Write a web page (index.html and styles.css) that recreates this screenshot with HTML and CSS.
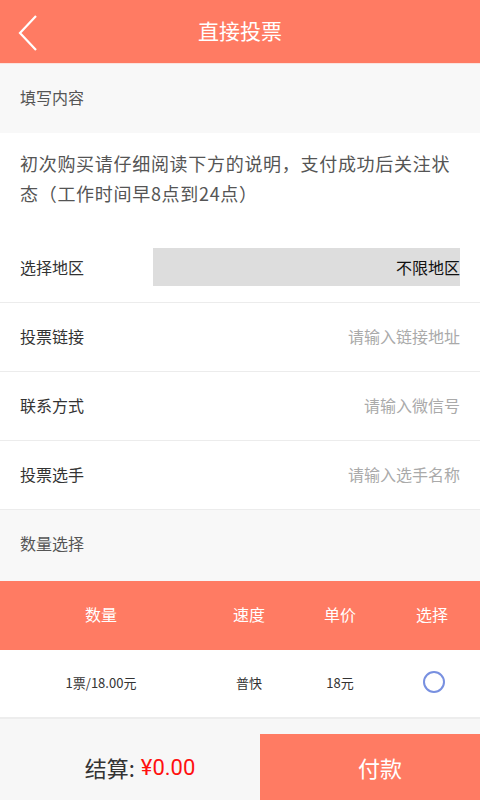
FILE: index.html
```html
<!DOCTYPE html>
<html lang="zh-CN">
<head>
<meta charset="utf-8">
<title>直接投票</title>
<link rel="stylesheet" href="styles.css">
</head>
<body>
<div class="page">
  <header class="topbar">
    <svg class="back" width="22" height="38" viewBox="0 0 22 38"><polyline points="18,2 2,19 18,36" fill="none" stroke="#fff" stroke-width="2.2"/></svg>
    <h1 class="title">直接投票</h1>
  </header>
  <div class="section">填写内容</div>
  <div class="notice">初次购买请仔细阅读下方的说明，支付成功后关注状态（工作时间早8点到24点）</div>
  <div class="row region">
    <span class="label">选择地区</span>
    <div class="select">不限地区</div>
  </div>
  <div class="row">
    <span class="label">投票链接</span>
    <span class="placeholder">请输入链接地址</span>
  </div>
  <div class="row">
    <span class="label">联系方式</span>
    <span class="placeholder">请输入微信号</span>
  </div>
  <div class="row">
    <span class="label">投票选手</span>
    <span class="placeholder">请输入选手名称</span>
  </div>
  <div class="section section-qty">数量选择</div>
  <div class="thead">
    <span>数量</span><span>速度</span><span>单价</span><span>选择</span>
  </div>
  <div class="trow">
    <span>1票/18.00元</span><span>普快</span><span>18元</span><span class="radio-cell"><i class="radio"></i></span>
  </div>
  <div class="spacer"></div>
  <footer class="bottombar">
    <div class="total">结算: <span class="amount">¥0.00</span></div>
    <div class="pay">付款</div>
  </footer>
</div>
</body>
</html>
```
FILE: styles.css
```css
* { box-sizing: border-box; margin: 0; padding: 0; }
html, body { width: 480px; height: 800px; overflow: hidden; }
body { font-family: "Noto Sans CJK SC", "Noto Sans", sans-serif; background: #f7f7f7; color: #444; }
.page { display: flex; flex-direction: column; height: 800px; }
.topbar { height: 64px; background: #ff7b63; display: flex; align-items: center; justify-content: center; position: relative; border-bottom: 1px solid #fbe3de; padding-bottom: 2px; }
.back { position: absolute; left: 18px; top: 14px; }
.title { font-size: 21px; font-weight: normal; color: #fff; line-height: 1; }
.section { height: 69px; background: #f8f8f8; display: flex; align-items: center; padding: 0 0 3px 20px; font-size: 16px; color: #555; }
.section-qty { height: 70px; padding-bottom: 5px; }
.notice { background: #fff; padding: 15px 20px 0 20px; font-size: 18px; letter-spacing: 0.7px; line-height: 30px; color: #555; height: 102px; }
.row { background: #fff; height: 69px; display: flex; align-items: center; justify-content: space-between; padding: 0 20px 2px; border-bottom: 1px solid #ececec; }
.region { height: 68px; padding-bottom: 3px; }
.label { font-size: 16px; color: #333; }
.select { width: 307px; height: 38px; background: #dddddd; display: flex; align-items: center; justify-content: flex-end; font-size: 16px; color: #111; padding-bottom: 1px; }
.placeholder { font-size: 16px; color: #aaa; }
.thead, .trow { display: grid; grid-template-columns: 202px 94px 88px 96px; align-items: center; text-align: center; }
.thead { height: 69px; background: #ff7b63; color: #fff; font-size: 16px; margin-top: 1px; padding-bottom: 3px; }
.trow { height: 69px; background: #fff; font-size: 13px; color: #333; border-bottom: 2px solid #ededed; padding-bottom: 3px; }
.radio-cell { display: flex; justify-content: center; padding-left: 3px; }
.radio { display: block; width: 22px; height: 22px; border: 2px solid #7890e0; border-radius: 50%; margin-top: 0; }
.spacer { height: 15px; background: #f7f7f7; }
.bottombar { flex: 1; display: flex; background: #f7f7f7; }
.total { width: 260px; display: flex; align-items: center; justify-content: center; font-size: 22px; color: #333; padding-left: 20px; }
.amount { color: #ff1010; margin-left: 6px; font-family: Roboto, "Noto Sans", sans-serif; }
.pay { flex: 1; background: #ff7b63; color: #fff; font-size: 22px; display: flex; align-items: center; justify-content: center; padding-left: 20px; }
```
